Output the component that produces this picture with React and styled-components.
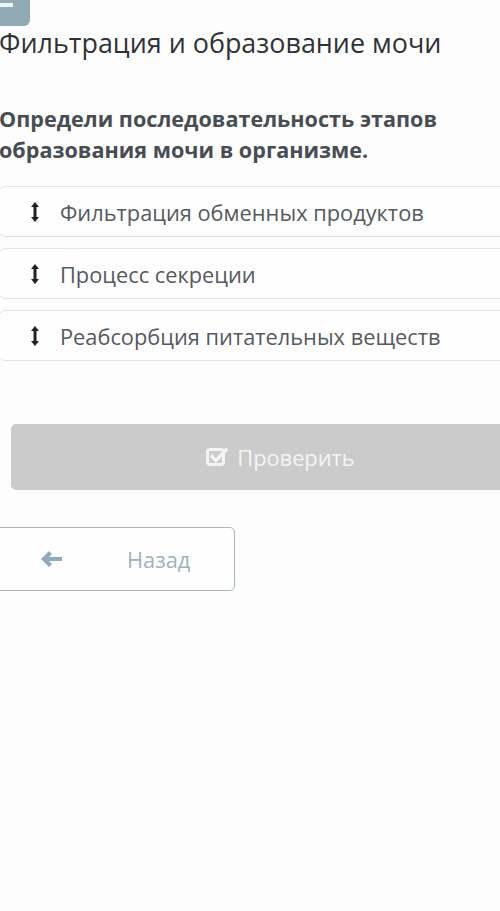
import React from "react";
import styled, { createGlobalStyle } from "styled-components";

const Global = createGlobalStyle`
  html, body { margin: 0; padding: 0; background: #fdfdfd; overflow: hidden; }
  body { font-family: "Open Sans", "Noto Sans", sans-serif; }
`;

const Page = styled.div`
  width: 540px;
  margin-left: -10px;
  display: flex;
  flex-direction: column;
  min-height: 911px;
`;

const TopTab = styled.div`
  width: 40px;
  height: 26px;
  background: #92aab6;
  border-radius: 0 0 6px 0;
  display: flex;
  align-items: flex-start;
  padding-top: 3px;
  box-sizing: border-box;
`;

const TabBar = styled.span`
  display: block;
  width: 23px;
  height: 4px;
  background: #f4f7f8;
`;

const Title = styled.h1`
  margin: 0 0 0 9px;
  font-weight: 400;
  font-size: 26.9px;
  line-height: 34px;
  color: #2f3336;
  white-space: nowrap;
`;

const Question = styled.p`
  margin: 43px 0 0 9px;
  font-weight: 700;
  font-size: 21.6px;
  line-height: 31px;
  color: #474d52;
  white-space: nowrap;
`;

const List = styled.div`
  margin: 21px 0 0 7px;
  display: flex;
  flex-direction: column;
  gap: 11px;
`;

const Card = styled.div`
  height: 51px;
  box-sizing: border-box;
  border: 1.5px solid #e1e3e4;
  border-radius: 9px;
  background: #fefefe;
  display: flex;
  align-items: center;
  padding-left: 33px;
  gap: 21px;
`;

const CardText = styled.span`
  font-size: 21.8px;
  color: #555a5e;
  padding-top: 2px;
`;

const DragIcon = () => (
  <svg width="8" height="20" viewBox="0 0 8 20">
    <path d="M4 0 L8 5 H5.5 V15 H8 L4 20 L0 15 H2.5 V5 H0 Z" fill="#1f2224" />
  </svg>
);

const CheckButton = styled.button`
  margin: 63px 0 0 21px;
  width: 539px;
  height: 66px;
  border: none;
  border-radius: 5px;
  background: #cbcbcb;
  color: #f4f4f4;
  font-family: inherit;
  font-size: 21.8px;
  display: flex;
  align-items: center;
  justify-content: center;
  gap: 8px;
  padding: 0;
`;

const CheckIcon = () => (
  <svg width="23" height="20" viewBox="0 0 23 20">
    <rect x="1.5" y="2.5" width="16" height="15" rx="2.5" fill="none" stroke="#f4f4f4" strokeWidth="3" />
    <path d="M6 9.5 L10 13.5 L20 3" fill="none" stroke="#f4f4f4" strokeWidth="3.4" strokeLinecap="square" />
  </svg>
);

const BackButton = styled.button`
  margin: 37px 0 0 5px;
  width: 240px;
  height: 64px;
  box-sizing: border-box;
  border: 1.5px solid #a6b9c2;
  border-radius: 5px;
  background: #fefefe;
  display: flex;
  align-items: center;
  padding: 0 0 0 45px;
  font-family: inherit;
  font-size: 21.8px;
  color: #9fb2bb;
`;

const BackLabel = styled.span`
  margin-left: 64px;
`;

const ArrowIcon = () => (
  <svg width="22" height="16" viewBox="0 0 22 16">
    <path d="M8 0 L0 8 L8 16 L11 13 L8 10 H21 V6 H8 L11 3 Z" fill="#8eabba" />
  </svg>
);

const items = [
  "Фильтрация обменных продуктов",
  "Процесс секреции",
  "Реабсорбция питательных веществ",
];

export default function App() {
  return (
    <>
      <Global />
      <Page>
        <TopTab>
          <TabBar />
        </TopTab>
        <Title>Фильтрация и образование мочи</Title>
        <Question>
          Определи последовательность этапов
          <br />
          образования мочи в организме.
        </Question>
        <List>
          {items.map((t) => (
            <Card key={t}>
              <DragIcon />
              <CardText>{t}</CardText>
            </Card>
          ))}
        </List>
        <CheckButton>
          <CheckIcon />
          Проверить
        </CheckButton>
        <BackButton>
          <ArrowIcon />
          <BackLabel>Назад</BackLabel>
        </BackButton>
      </Page>
    </>
  );
}
